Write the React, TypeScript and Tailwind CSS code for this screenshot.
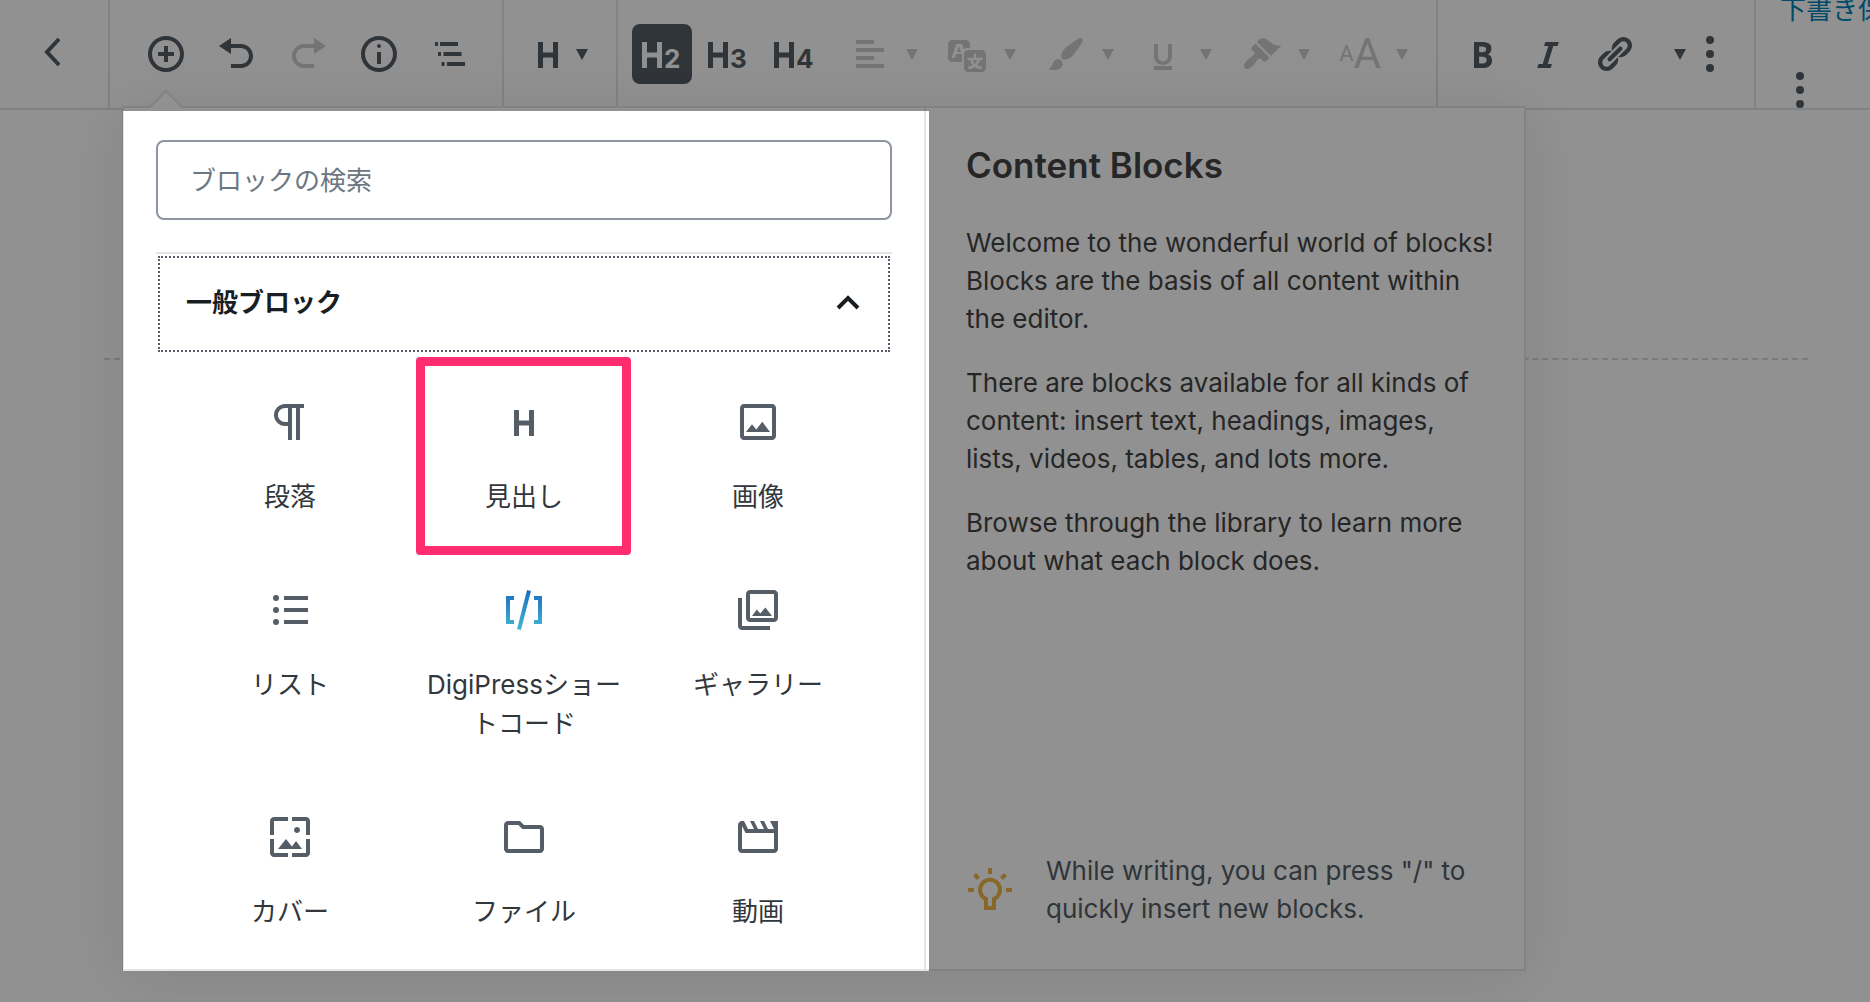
import { ReactNode } from 'react'

type IconProps = { className?: string }

type ToolbarItem = {
  label: string
  path: string
  disabled?: boolean
}

type Block = {
  label: string
  icon: ReactNode
  highlighted?: boolean
}

const documentTools: ToolbarItem[] = [
  {
    label: 'ブロックの追加',
    path: 'M10 1c-5 0-9 4-9 9s4 9 9 9 9-4 9-9-4-9-9-9zm0 16c-3.9 0-7-3.1-7-7s3.1-7 7-7 7 3.1 7 7-3.1 7-7 7zm1-11H9v3H6v2h3v3h2v-3h3V9h-3V6z',
  },
  {
    label: '元に戻す',
    path: 'M12 5H7V2L1 6l6 4V7h5c2.2 0 4 1.8 4 4s-1.8 4-4 4H7v2h5c3.3 0 6-2.7 6-6s-2.7-6-6-6z',
  },
  {
    label: 'やり直す',
    path: 'M8 5h5V2l6 4-6 4V7H8c-2.2 0-4 1.8-4 4s1.8 4 4 4h5v2H8c-3.3 0-6-2.7-6-6s2.7-6 6-6z',
    disabled: true,
  },
  {
    label: 'コンテンツ構造',
    path: 'M9 15h2V9H9v6zm1-10c-.5 0-1 .5-1 1s.5 1 1 1 1-.5 1-1-.5-1-1-1zm0-4c-5 0-9 4-9 9s4 9 9 9 9-4 9-9-4-9-9-9zm0 16c-3.9 0-7-3.1-7-7s3.1-7 7-7 7 3.1 7 7-3.1 7-7 7z',
  },
  {
    label: 'ブロックナビゲーション',
    path: 'M2.5 4H4v2H2.5zM5 4h9v2H5zM4 9h1.5v2H4zM6.75 9h9v2h-9zM5.75 14h1.5v2h-1.5zM8.5 14h9v2h-9z',
  },
]

const formatMenus: ToolbarItem[] = [
  {
    label: '配置',
    path: 'M12 5V3H3v2h9zm5 4V7H3v2h14zm-5 4v-2H3v2h9zm5 4v-2H3v2h14z',
  },
  {
    label: '翻訳',
    path: 'M11 7H9.49c-.63 0-1.25.3-1.59.7L7 5H4.13l-2.39 7h1.69l.74-2H7v4H2c-1.1 0-2-.9-2-2V5c0-1.1.9-2 2-2h7c1.1 0 2 .9 2 2v2zM6.51 9H4.49l1-2.93zM10 8h7c1.1 0 2 .9 2 2v7c0 1.1-.9 2-2 2h-7c-1.1 0-2-.9-2-2v-7c0-1.1.9-2 2-2zm7.25 5v-1.08h-3.17V9.75h-1.16v2.17H9.75V13h1.28c.11.85.56 1.85 1.28 2.62-.87.36-1.89.62-2.31.62-.01.02.22.97.2 1.46.84 0 2.21-.5 3.28-1.15 1.09.65 2.48 1.15 3.34 1.15-.02-.49.2-1.44.2-1.46-.43 0-1.49-.27-2.38-.63.7-.77 1.14-1.77 1.25-2.61h1.36zm-3.81 1.93c-.5-.46-.85-1.13-1.01-1.93h2.09c-.17.8-.51 1.47-1 1.93l-.04.03s-.03-.02-.04-.03z',
  },
  {
    label: '文字色',
    path: 'M18.33 3.57s.27-.8-.31-1.36c-.53-.52-1.22-.24-1.22-.24-.61.3-5.76 3.47-7.67 5.57-.86.96-2.06 3.79-1.09 4.82.92.98 3.96-.17 4.79-1 2.06-2.06 5.21-7.17 5.5-7.79zM1.4 17.65c2.37-1.56 1.46-3.41 3.23-4.64.93-.65 2.22-.62 3.08.29.63.67.8 2.57-.16 3.46-1.57 1.45-4 1.55-6.15.89z',
  },
  {
    label: '下線',
    path: 'M14 5h-2v5.71c0 1.99-1.12 2.98-2.45 2.98-1.32 0-2.55-1-2.55-2.96V5H5v5.87c0 1.91 1 4.54 4.48 4.54 3.49 0 4.52-2.58 4.52-4.5V5zm0 13v-2H5v2h9z',
  },
  {
    label: 'マーカー',
    path: 'M14.48 11.06L7.41 3.99l1.5-1.5c.5-.56 2.3-.47 3.51.32 1.21.8 1.43 1.28 2.91 2.1 1.18.64 2.45 1.26 4.45.85zm-.71.71L6.7 4.7 4.93 6.47c-.39.39-.39 1.02 0 1.41l1.06 1.06c.39.39.39 1.03 0 1.42-.6.6-1.43 1.11-2.21 1.69-.35.26-.7.53-1.01.84C1.43 14.23.4 16.08 1.4 17.07c.99 1 2.84-.03 4.18-1.36.31-.31.58-.66.85-1.02.57-.78 1.08-1.61 1.69-2.21.39-.39 1.02-.39 1.41 0l1.06 1.06c.39.39 1.02.39 1.41 0z',
  },
]

const inlineTools: ToolbarItem[] = [
  {
    label: '太字',
    path: 'M6 4v13h4.54c1.37 0 2.46-.33 3.26-1 .8-.66 1.2-1.58 1.2-2.77 0-.84-.17-1.51-.51-2.01s-.9-.85-1.67-1.03v-.09c.57-.1 1.02-.4 1.36-.9s.51-1.13.51-1.91c0-1.14-.39-1.98-1.17-2.5C12.75 4.26 11.5 4 9.78 4H6zm2.57 5.15V6.26h1.36c.73 0 1.27.11 1.61.32.34.22.51.58.51 1.07 0 .54-.16.92-.47 1.15s-.82.35-1.51.35h-1.5zm0 2.19h1.6c1.44 0 2.16.53 2.16 1.61 0 .6-.17 1.05-.51 1.34s-.86.43-1.57.43H8.57v-3.38z',
  },
  {
    label: 'イタリック',
    path: 'M14.78 6h-2.13l-2.8 9h2.12l-.62 2H4.6l.62-2h2.14l2.8-9H8.03l.62-2h6.75z',
  },
  {
    label: 'リンク',
    path: 'M17.74 2.76c1.68 1.69 1.68 4.41 0 6.1l-1.53 1.52c-1.12 1.12-2.7 1.47-4.14 1.09l2.62-2.61.76-.77.76-.76c.84-.84.84-2.2 0-3.04-.84-.85-2.2-.85-3.04 0l-.77.76-3.38 3.38c-.37-1.44-.02-3.02 1.1-4.14l1.52-1.53c1.69-1.68 4.42-1.68 6.1 0zM8.59 13.43l5.34-5.34c.42-.42.42-1.1 0-1.52-.44-.43-1.13-.39-1.53 0l-5.33 5.34c-.42.42-.42 1.1 0 1.52.44.43 1.13.39 1.52 0zm-.76 2.29l4.14-4.15c.38 1.44.03 3.02-1.09 4.14l-1.52 1.53c-1.69 1.68-4.41 1.68-6.1 0-1.68-1.68-1.68-4.42 0-6.1l1.53-1.52c1.12-1.12 2.7-1.47 4.14-1.1l-4.14 4.15c-.85.84-.85 2.2 0 3.05.84.84 2.2.84 3.04 0z',
  },
]

const HEADING_PATH = 'M12.5 4v5.2h-5V4H5v13h2.5v-5.2h5V17H15V4'

function Dashicon({ path }: { path: string }) {
  return (
    <svg viewBox="0 0 20 20" className="size-10 fill-current" aria-hidden="true">
      <path d={path} />
    </svg>
  )
}

function BlockIcon({ children }: { children: ReactNode }) {
  return (
    <svg viewBox="0 0 24 24" className="size-12 fill-current" aria-hidden="true">
      {children}
    </svg>
  )
}

function Caret() {
  return (
    <svg viewBox="0 0 20 20" className="size-5 fill-current" aria-hidden="true">
      <path d="M4 5h12l-6 11z" />
    </svg>
  )
}

function MoreIcon({ className }: IconProps) {
  return (
    <svg viewBox="0 0 20 36" className={className} aria-hidden="true">
      <circle cx="10" cy="4" r="4" />
      <circle cx="10" cy="18" r="4" />
      <circle cx="10" cy="32" r="4" />
    </svg>
  )
}

function ShortcodeIcon() {
  return (
    <svg viewBox="0 0 48 48" className="size-12" fill="none" aria-hidden="true">
      <defs>
        <linearGradient id="shortcode" gradientUnits="userSpaceOnUse" x1="0" y1="8" x2="0" y2="40">
          <stop offset="0" stopColor="#1e73be" />
          <stop offset="1" stopColor="#40b0d0" />
        </linearGradient>
      </defs>
      <g stroke="url(#shortcode)" strokeWidth="4">
        <path d="M14 12H8v24h6M34 12h6v24h-6" />
        <path d="M29 4.5l-10 39" />
      </g>
    </svg>
  )
}

function TipIcon() {
  return (
    <svg viewBox="0 0 48 48" className="size-12 shrink-0 text-[#f0b849]" aria-hidden="true">
      <g fill="none" stroke="currentColor" strokeWidth="4">
        <path d="M20 42h8v-9a10 10 0 1 0-8 0z" />
        <path d="M24 2v6M2 24h6M40 24h6M8.5 8.500l4 4M39.500 8.500l-4 4" />
      </g>
    </svg>
  )
}

const blocks: Block[] = [
  {
    label: '段落',
    icon: (
      <BlockIcon>
        <path d="M11 5v7H9.5C7.6 12 6 10.4 6 8.5S7.6 5 9.5 5H11m8-2H9.5C6.5 3 4 5.5 4 8.5S6.5 14 9.5 14H11v7h2V5h2v16h2V5h2V3z" />
      </BlockIcon>
    ),
  },
  {
    label: '見出し',
    icon: (
      <span className="flex size-12 items-center justify-center">
        <Dashicon path={HEADING_PATH} />
      </span>
    ),
    highlighted: true,
  },
  {
    label: '画像',
    icon: (
      <BlockIcon>
        <path d="M19 5v14H5V5h14m0-2H5c-1.1 0-2 .9-2 2v14c0 1.1.9 2 2 2h14c1.1 0 2-.9 2-2V5c0-1.1-.9-2-2-2z" />
        <path d="M14.14 11.86l-3 3.87L9 13.14 6 17h12l-3.86-5.14z" />
      </BlockIcon>
    ),
  },
  {
    label: 'リスト',
    icon: (
      <BlockIcon>
        <path d="M9 19h12v-2H9v2zm0-6h12v-2H9v2zm0-8v2h12V5H9z" />
        <circle cx="5" cy="6" r="1.5" />
        <circle cx="5" cy="12" r="1.5" />
        <circle cx="5" cy="18" r="1.5" />
      </BlockIcon>
    ),
  },
  { label: 'DigiPressショートコード', icon: <ShortcodeIcon /> },
  {
    label: 'ギャラリー',
    icon: (
      <BlockIcon>
        <path d="M20 4v12H8V4h12m0-2H8c-1.1 0-2 .9-2 2v12c0 1.1.9 2 2 2h12c1.1 0 2-.9 2-2V4c0-1.1-.9-2-2-2z" />
        <path d="M9 15l2.4-3.2 1.7 1.9 2.6-2.9L19 15z" />
        <path d="M2 6v14c0 1.1.9 2 2 2h14v-2H4V6H2z" />
      </BlockIcon>
    ),
  },
  {
    label: 'カバー',
    icon: (
      <BlockIcon>
        <path d="M4 4h7V2H4c-1.1 0-2 .9-2 2v7h2V4zm6 9l-4 5h12l-3-4-2.03 2.71L10 13zm7-4.5c0-.83-.67-1.5-1.5-1.5S14 7.67 14 8.5s.67 1.5 1.5 1.5S17 9.33 17 8.5zM20 2h-7v2h7v7h2V4c0-1.1-.9-2-2-2zm0 18h-7v2h7c1.1 0 2-.9 2-2v-7h-2v7zM4 13H2v7c0 1.1.9 2 2 2h7v-2H4v-7z" />
      </BlockIcon>
    ),
  },
  {
    label: 'ファイル',
    icon: (
      <BlockIcon>
        <path d="M9.17 6l2 2H20v10H4V6h5.17M10 4H4c-1.1 0-1.99.9-1.99 2L2 18c0 1.1.9 2 2 2h16c1.1 0 2-.9 2-2V8c0-1.1-.9-2-2-2h-8l-2-2z" />
      </BlockIcon>
    ),
  },
  {
    label: '動画',
    icon: (
      <BlockIcon>
        <path d="M4 6.47L5.76 10H20v8H4V6.47M22 4h-4l2 4h-3l-2-4h-2l2 4h-3l-2-4H8l2 4H7L5 4H4c-1.1 0-1.99.9-1.99 2L2 18c0 1.1.9 2 2 2h16c1.1 0 2-.9 2-2V4z" />
      </BlockIcon>
    ),
  },
]

function Header() {
  return (
    <header className="flex h-[110px] items-stretch overflow-hidden border-b-2 border-[#e2e4e7] text-[#555d66]">
      <div className="flex w-[110px] shrink-0 border-r-2 border-[#e2e4e7]">
        <button type="button" aria-label="戻る" className="flex flex-1 items-center justify-center pb-1 pr-[2px]">
          <svg viewBox="0 0 20 32" className="h-8 w-5" fill="none" stroke="currentColor" strokeWidth="4" aria-hidden="true">
            <path d="M16 3L4 16l12 13" />
          </svg>
        </button>
      </div>

      <div className="flex shrink-0 border-r-2 border-[#e2e4e7] pl-5 pr-[17px]">
        {documentTools.map(({ label, path, disabled }) => (
          <button
            key={label}
            type="button"
            aria-label={label}
            disabled={disabled}
            className="flex w-[71px] items-center justify-center disabled:opacity-30"
          >
            <Dashicon path={path} />
          </button>
        ))}
      </div>

      <div className="flex shrink-0 border-r-2 border-[#e2e4e7] px-6">
        <button type="button" aria-label="ブロックタイプを変更" className="flex items-center gap-1">
          <Dashicon path={HEADING_PATH} />
          <Caret />
        </button>
      </div>

      <div className="flex shrink-0 items-center border-r-2 border-[#e2e4e7] pl-[14px] pr-6">
        <div className="flex gap-[6px]">
          {[2, 3, 4].map((level) => (
            <button
              key={level}
              type="button"
              aria-label={`見出し ${level}`}
              aria-pressed={level === 2}
              className="flex h-[60px] w-[60px] items-baseline gap-[2px] rounded-lg pl-[10px] pt-[18px] aria-pressed:bg-[#555d66] aria-pressed:text-white"
            >
              <svg viewBox="5 4 10 13" className="h-[26px] w-5 fill-current" aria-hidden="true">
                <path d={HEADING_PATH} />
              </svg>
              <span className="text-[26px] font-bold leading-none">{level}</span>
            </button>
          ))}
        </div>
        {formatMenus.map(({ label, path }) => (
          <button key={label} type="button" aria-label={label} disabled className="flex items-center gap-3 pl-[26px] opacity-30">
            <Dashicon path={path} />
            <Caret />
          </button>
        ))}
        <button type="button" aria-label="文字サイズ" disabled className="flex items-center gap-3 pl-[26px] opacity-30">
          <span className="flex w-10 items-center justify-center font-[Roboto] leading-[42px]">
            <span className="text-[22px]">A</span>
            <span className="text-[42px]">A</span>
          </span>
          <Caret />
        </button>
      </div>

      <div className="flex shrink-0 items-center border-r-2 border-[#e2e4e7] pl-6 pr-[34px]">
        {inlineTools.map(({ label, path }) => (
          <button key={label} type="button" aria-label={label} className="mr-[26px]">
            <Dashicon path={path} />
          </button>
        ))}
        <button type="button" aria-label="その他のリッチテキスト" className="flex w-10 justify-center">
          <Caret />
        </button>
        <button type="button" aria-label="詳細設定">
          <MoreIcon className="h-9 w-5 fill-current" />
        </button>
      </div>

      <div className="flex min-w-0 flex-1 flex-col items-start justify-end pl-6">
        <button type="button" className="mb-[42px] whitespace-nowrap text-[26px] leading-10 text-[#0085ba]">
          下書き保存
        </button>
        <button type="button" aria-label="ツールと設定" className="flex w-10 justify-center">
          <MoreIcon className="h-9 w-5 fill-current" />
        </button>
      </div>
    </header>
  )
}

function BlockMenu() {
  return (
    <div className="relative z-10 w-[802px] border-r-2 border-[#e2e4e7] px-8 pt-8">
      <input
        type="search"
        aria-label="ブロックの検索"
        placeholder="ブロックの検索"
        className="block h-20 w-full rounded-lg border-2 border-[#8d96a0] px-8 text-[26px] placeholder:text-[#6c7781]"
      />
      <section className="mt-8 border-t-2 border-[#e2e4e7] p-[2px]">
        <h2>
          <button
            type="button"
            aria-expanded="true"
            className="flex h-24 w-full items-center justify-between border-2 border-dotted border-[#555d66] pb-1 pl-[26px] pr-7 text-[26px] font-bold text-[#191e23]"
          >
            一般ブロック
            <svg viewBox="0 0 24 16" className="h-4 w-6" fill="none" stroke="currentColor" strokeWidth="4" aria-hidden="true">
              <path d="M2 14L12 4l10 10" />
            </svg>
          </button>
        </h2>
      </section>
      <ul className="mt-3 grid grid-cols-3 px-[17px]">
        {blocks.map(({ label, icon, highlighted }) => (
          <li key={label} className="relative">
            <button
              type="button"
              className="flex w-full flex-col items-center px-4 pb-[38px] pt-8 text-[26px] leading-[39px] text-[#32373c]"
            >
              <span className="mb-[31px] text-[#555d66]">{icon}</span>
              {label}
            </button>
            {highlighted && (
              <span className="pointer-events-none absolute -bottom-px -top-[9px] left-[9px] right-[10px] rounded border-[9px] border-[#ff2d6f]" />
            )}
          </li>
        ))}
      </ul>
      {/* dims everything outside the block list */}
      <div className="pointer-events-none absolute -bottom-[2px] -left-px -right-[5px] top-[3px] shadow-[0_0_0_2000px_rgba(0,0,0,0.43)]" />
    </div>
  )
}

function InserterHelp() {
  return (
    <aside className="flex w-[598px] flex-col pb-[41px] pl-10 pr-7 pt-[37px] text-[#444]">
      <h2 className="text-[35px] font-semibold leading-10">Content Blocks</h2>
      <div className="mt-[39px] space-y-[26px] text-[26px] leading-[38px]">
        <p>Welcome to the wonderful world of blocks! Blocks are the basis of all content within the editor.</p>
        <p>
          There are blocks available for all kinds of content: insert text, headings, images, lists, videos, tables,
          and lots more.
        </p>
        <p>Browse through the library to learn more about what each block does.</p>
      </div>
      <div className="mt-auto flex items-center gap-8 text-[26px] leading-[38px] text-[#555d66]">
        <TipIcon />
        <p>While writing, you can press "/" to quickly insert new blocks.</p>
      </div>
    </aside>
  )
}

export default function App() {
  return (
    <div className="relative min-h-screen overflow-hidden bg-white font-[Inter,'Noto_Sans_CJK_JP',sans-serif]">
      <Header />
      <main>
        <hr className="ml-[104px] mr-[62px] mt-[248px] border-t-2 border-dashed border-[#d5d8dc]" />
      </main>
      <div className="absolute left-[122px] top-[106px] flex border-2 border-[#e2e4e7] bg-white shadow-[0_6px_60px_rgba(25,30,35,0.1)]">
        <svg viewBox="0 0 32 20" className="absolute -top-[18px] left-[26px] h-5 w-8" aria-hidden="true">
          <path d="M0 18L16 2l16 16v2H0z" fill="#fff" />
          <path d="M0 17L16 1l16 16" fill="none" stroke="#e2e4e7" strokeWidth="2" />
        </svg>
        <BlockMenu />
        <InserterHelp />
      </div>
    </div>
  )
}
